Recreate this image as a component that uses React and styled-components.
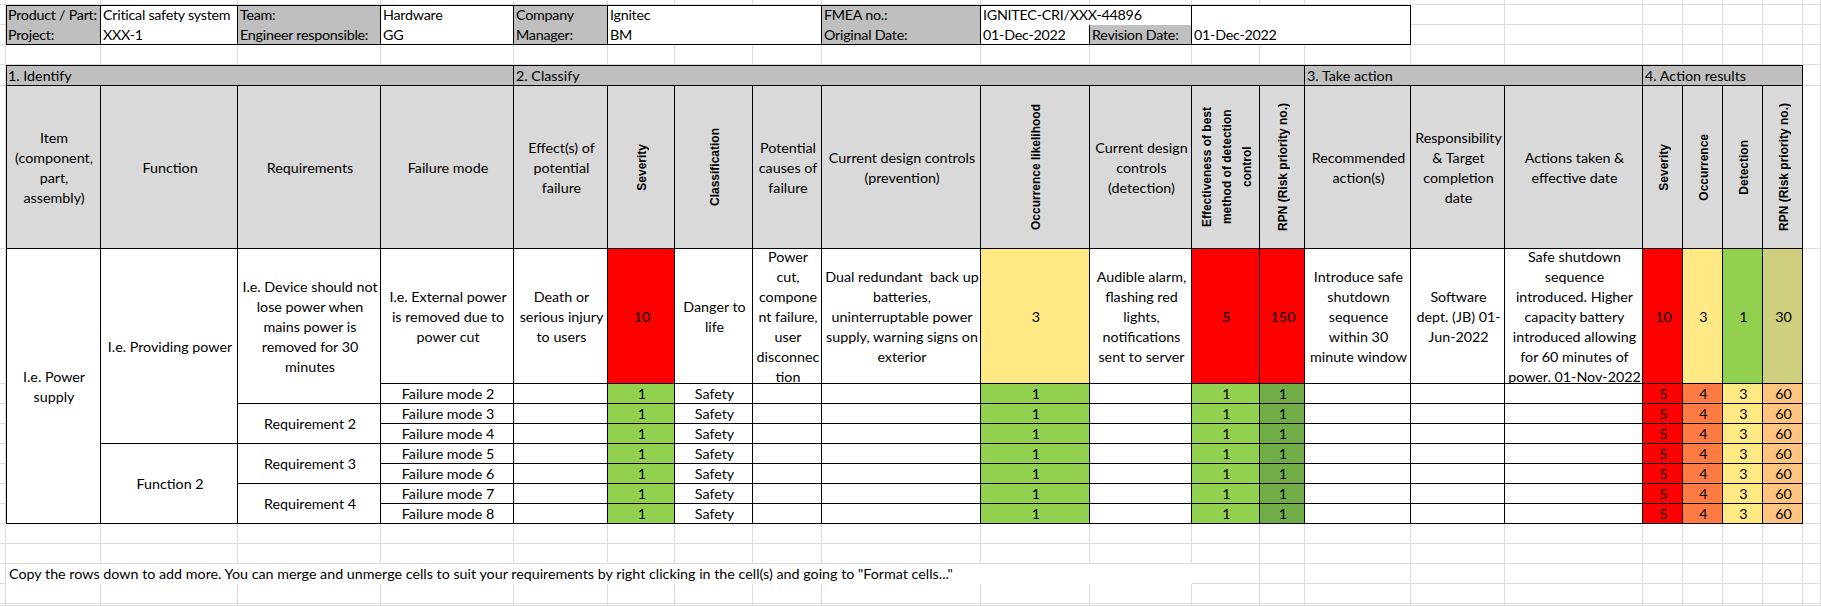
import styled, { createGlobalStyle } from "styled-components";

const GlobalStyle = createGlobalStyle`
  html, body {
    margin: 0;
    padding: 0;
    background: #fff;
  }
  body {
    font-family: Lato, "Liberation Sans", sans-serif;
  }
`;

// spreadsheet column widths / row heights (px)
const COLS = [6, 95, 137, 143, 133, 94, 67, 78, 69, 159, 109, 102, 68, 45, 106, 94, 138, 40, 40, 40, 40, 18];
const ROWS = [5, 20, 20, 20, 21, 163, 135, 20, 20, 20, 20, 20, 20, 20, 20, 20, 20, 20, 2];

const RED = "#FF0000";
const YEL = "#FFE984";
const GRN = "#92D050";
const DGRN = "#70AD47";
const OLV = "#CDCF7F";
const ORG = "#FF7B43";
const LORG = "#FFC47F";
const GRAY = "#BFBFBF";
const LGRAY = "#D9D9D9";

const Sheet = styled.div`
  display: grid;
  grid-template-columns: ${COLS.map((w) => w + "px").join(" ")};
  grid-template-rows: ${ROWS.map((h) => h + "px").join(" ")};
  width: 1821px;
  height: 606px;
  overflow: hidden;
  font-size: 14.3px;
  color: #000;
`;

const GridLine = styled.div`
  grid-column: ${(p) => p.$c};
  grid-row: ${(p) => p.$r};
  box-shadow: inset -1px -1px 0 #dcdcdc;
`;

const borders = (p) => {
  const s = [];
  s.push(`inset ${p.$noRight ? 0 : -1}px ${p.$noBottom ? 0 : -1}px 0 #000`);
  if (p.$left) s.push("inset 1px 0 0 #000");
  if (p.$top) s.push("inset 0 1px 0 #000");
  return s.join(", ");
};

const Cell = styled.div`
  grid-column: ${(p) => p.$c} / span ${(p) => p.$cs || 1};
  grid-row: ${(p) => p.$r} / span ${(p) => p.$rs || 1};
  background: ${(p) => p.$bg || "#fff"};
  display: flex;
  align-items: center;
  justify-content: ${(p) => (p.$align === "left" ? "flex-start" : "center")};
  text-align: ${(p) => (p.$align === "left" ? "left" : "center")};
  padding: 0 1px 0 2px;
  line-height: 20px;
  white-space: pre;
  overflow: hidden;
  box-shadow: ${borders};
`;

const InfoCell = styled(Cell)`
  letter-spacing: -0.25px;
`;

const Note = styled.div`
  grid-column: 2 / span 11;
  grid-row: 17;
  background: #fff;
  display: flex;
  align-items: center;
  padding-left: 3px;
  white-space: pre;
  line-height: 20px;
`;

const VText = styled.div`
  writing-mode: vertical-rl;
  transform: rotate(180deg);
  font-family: "Liberation Sans", Arial, sans-serif;
  font-weight: bold;
  font-size: 12px;
  line-height: 20px;
  text-align: center;
  white-space: pre;
`;

const info = [
  [
    { c: 2, t: "Product / Part:", label: true, left: true },
    { c: 3, t: "Critical safety system" },
    { c: 4, t: "Team:", label: true },
    { c: 5, t: "Hardware" },
    { c: 6, t: "Company", label: true },
    { c: 7, cs: 3, t: "Ignitec" },
    { c: 10, t: "FMEA no.:", label: true },
    { c: 11, cs: 2, t: "IGNITEC-CRI/XXX-44896" },
    { c: 13, cs: 3, t: "" },
  ],
  [
    { c: 2, t: "Project:", label: true, left: true },
    { c: 3, t: "XXX-1" },
    { c: 4, t: "Engineer responsible:", label: true },
    { c: 5, t: "GG" },
    { c: 6, t: "Manager:", label: true },
    { c: 7, cs: 3, t: "BM" },
    { c: 10, t: "Original Date:", label: true },
    { c: 11, t: "01-Dec-2022" },
    { c: 12, t: "Revision Date:", label: true },
    { c: 13, cs: 3, t: "01-Dec-2022" },
  ],
];

const sections = [
  { c: 2, cs: 4, t: "1. Identify" },
  { c: 6, cs: 9, t: "2. Classify" },
  { c: 15, cs: 3, t: "3. Take action" },
  { c: 18, cs: 4, t: "4. Action results" },
];

const headers = [
  { t: "Item\n(component,\npart,\nassembly)" },
  { t: "Function" },
  { t: "Requirements" },
  { t: "Failure mode" },
  { t: "Effect(s) of\npotential\nfailure" },
  { t: "Severity", v: true },
  { t: "Classification", v: true },
  { t: "Potential\ncauses of\nfailure" },
  { t: "Current design controls\n(prevention)" },
  { t: "Occurrence likelihood", v: true },
  { t: "Current design\ncontrols\n(detection)" },
  { t: "Effectiveness of best\nmethod of detection\ncontrol", v: true },
  { t: "RPN (Risk priority no.)", v: true },
  { t: "Recommended\naction(s)" },
  { t: "Responsibility\n& Target\ncompletion\ndate" },
  { t: "Actions taken &\neffective date" },
  { t: "Severity", v: true },
  { t: "Occurrence", v: true },
  { t: "Detection", v: true },
  { t: "RPN (Risk priority no.)", v: true },
];

const mainRow = [
  { c: 6, t: "Death or\nserious injury\nto users" },
  { c: 7, t: "10", bg: RED },
  { c: 8, t: "Danger to\nlife" },
  { c: 9, t: "Power\ncut,\ncompone\nnt failure,\nuser\ndisconnec\ntion" },
  { c: 10, t: "Dual redundant\u00a0 back up\nbatteries,\nuninterruptable power\nsupply, warning signs on\nexterior" },
  { c: 11, t: "3", bg: YEL },
  { c: 12, t: "Audible alarm,\nflashing red\nlights,\nnotifications\nsent to server" },
  { c: 13, t: "5", bg: RED },
  { c: 14, t: "150", bg: RED },
  { c: 15, t: "Introduce safe\nshutdown\nsequence\nwithin 30\nminute window" },
  { c: 16, t: "Software\ndept. (JB) 01-\nJun-2022" },
  { c: 17, t: "Safe shutdown\nsequence\nintroduced. Higher\ncapacity battery\nintroduced allowing\nfor 60 minutes of\npower. 01-Nov-2022" },
  { c: 18, t: "10", bg: RED },
  { c: 19, t: "3", bg: YEL },
  { c: 20, t: "1", bg: GRN },
  { c: 21, t: "30", bg: OLV },
];

const smallRow = [
  { c: 6, t: "" },
  { c: 7, t: "1", bg: GRN },
  { c: 8, t: "Safety" },
  { c: 9, t: "" },
  { c: 10, t: "" },
  { c: 11, t: "1", bg: GRN },
  { c: 12, t: "" },
  { c: 13, t: "1", bg: GRN },
  { c: 14, t: "1", bg: DGRN },
  { c: 15, t: "" },
  { c: 16, t: "" },
  { c: 17, t: "" },
  { c: 18, t: "5", bg: RED },
  { c: 19, t: "4", bg: ORG },
  { c: 20, t: "3", bg: YEL },
  { c: 21, t: "60", bg: LORG },
];

const structure = [
  { c: 2, r: 7, rs: 8, t: "I.e. Power\nsupply", left: true },
  { c: 3, r: 7, rs: 4, t: "I.e. Providing power" },
  { c: 3, r: 11, rs: 4, t: "Function 2" },
  { c: 4, r: 7, rs: 2, t: "I.e. Device should not\nlose power when\nmains power is\nremoved for 30\nminutes" },
  { c: 4, r: 9, rs: 2, t: "Requirement 2" },
  { c: 4, r: 11, rs: 2, t: "Requirement 3" },
  { c: 4, r: 13, rs: 2, t: "Requirement 4" },
  { c: 5, r: 7, t: "I.e. External power\nis removed due to\npower cut" },
];

export default function App() {
  const grid = [];
  for (let r = 1; r <= ROWS.length; r++) {
    for (let c = 1; c <= COLS.length; c++) {
      grid.push(<GridLine key={`g${r}-${c}`} $r={r} $c={c} />);
    }
  }

  return (
    <>
      <GlobalStyle />
      <Sheet>
        {grid}

        {info.map((row, i) =>
          row.map((cell) => (
            <InfoCell
              key={`i${i}-${cell.c}`}
              $r={2 + i}
              $c={cell.c}
              $cs={cell.cs}
              $bg={cell.label ? GRAY : "#fff"}
              $align="left"
              $left={cell.left}
              $top={i === 0}
              $noBottom={i === 0}
            >
              {cell.t}
            </InfoCell>
          ))
        )}

        {sections.map((s) => (
          <Cell key={`s${s.c}`} $r={5} $c={s.c} $cs={s.cs} $bg={GRAY} $align="left" $top $left={s.c === 2}>
            {s.t}
          </Cell>
        ))}

        {headers.map((h, i) => (
          <Cell key={`h${i}`} $r={6} $c={2 + i} $bg={LGRAY} $left={i === 0}>
            {h.v ? <VText>{h.t}</VText> : h.t}
          </Cell>
        ))}

        {structure.map((s) => (
          <Cell key={`st${s.c}-${s.r}`} $r={s.r} $c={s.c} $rs={s.rs} $left={s.left}>
            {s.t}
          </Cell>
        ))}

        {mainRow.map((cell) => (
          <Cell key={`m${cell.c}`} $r={7} $c={cell.c} $bg={cell.bg}>
            {cell.t}
          </Cell>
        ))}

        {[2, 3, 4, 5, 6, 7, 8].map((n, i) => (
          <FailureRow key={`fr${n}`} r={8 + i} n={n} />
        ))}

        <Note>
          Copy the rows down to add more. You can merge and unmerge cells to suit your requirements by right clicking in the cell(s) and going to "Format cells..."
        </Note>
      </Sheet>
    </>
  );
}

const FailureRow = ({ r, n }) => (
  <>
    <Cell $r={r} $c={5}>{`Failure mode ${n}`}</Cell>
    {smallRow.map((cell) => (
      <Cell key={cell.c} $r={r} $c={cell.c} $bg={cell.bg}>
        {cell.t}
      </Cell>
    ))}
  </>
);
